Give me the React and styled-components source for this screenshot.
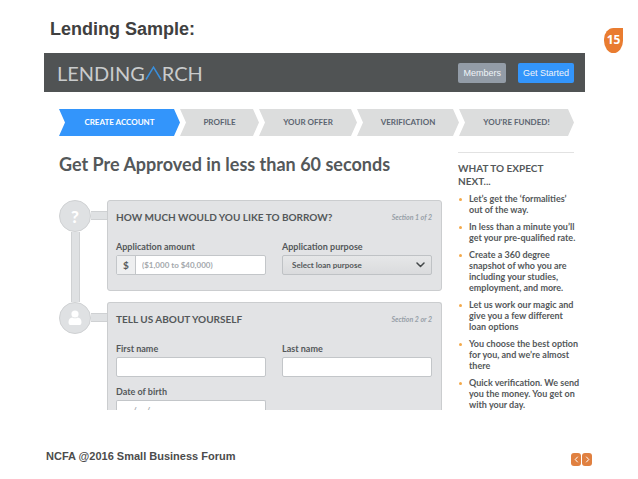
import React from 'react'
import styled, { createGlobalStyle } from 'styled-components'

const GlobalStyle = createGlobalStyle`
    * {
        box-sizing: border-box;
    }
    body {
        margin: 0;
        background: #fff;
        color: #54585a;
        font-family: Lato, 'Liberation Sans', sans-serif;
    }
    h1, h2, h3, p, ul {
        margin: 0;
        padding: 0;
    }
    button, input, select {
        font-family: inherit;
    }
`
const Slide = styled.div`
    min-height: 100vh;
    display: flex;
    flex-direction: column;
`
const SlideHeader = styled.header`
    display: flex;
    justify-content: space-between;
    padding: 18px 15px 0 50px;
    height: 53px;
`
const SlideTitle = styled.h1`
    font: bold 18px/22px 'Liberation Sans', Arial, sans-serif;
    color: #404040;
`
const PageNumber = styled.span`
    width: 19px;
    height: 25px;
    margin-top: 10px;
    border-radius: 10px 0 10px 10px / 12px 0 13px 13px;
    background: #e97c30;
    color: #fff;
    font: bold 12px/23px 'Open Sans', sans-serif;
    text-align: center;
`
const Site = styled.main`
    margin: 0 53px 0 44px;
`
const TopBar = styled.div`
    display: flex;
    align-items: center;
    padding: 0 11px 0 13px;
    height: 39px;
    background: #505354;
`
const Logo = styled.a`
    display: flex;
    align-items: center;
    margin-right: auto;
    color: #c9cbcc;
    font-size: 20px;
    line-height: 20px;
    font-weight: 400;
    text-decoration: none;
`
const TopButton = styled.button`
    height: 20px;
    margin-left: 12px;
    padding: 0 5px;
    border: 0;
    border-radius: 2px;
    background: ${({ $primary }) => ($primary ? '#3395fb' : '#939ca7')};
    color: #f0f4f8;
    font-family: 'Liberation Sans', Arial, sans-serif;
    font-size: 9px;
    line-height: 20px;
`
const Steps = styled.ol`
    display: flex;
    list-style: none;
    margin: 17px 11px 0 15px;
    padding: 0;
`
const Step = styled.li`
    flex: ${({ $size }) => $size} 1 0;
    height: 27px;
    clip-path: polygon(
        0 0, calc(100% - 6px) 0, 100% 50%, calc(100% - 6px) 100%, 0 100%, 6px 50%
    );
    background: ${({ $active }) => ($active ? '#3395fb' : '#dcdddd')};
    color: ${({ $active }) => ($active ? '#fff' : '#5b6470')};
    font-size: 8px;
    line-height: 27px;
    font-weight: 700;
    text-align: center;
    white-space: nowrap;
`
const Content = styled.div`
    display: grid;
    grid-template-columns: 1fr 116px;
    gap: 16px;
    padding: 16px 11px 0 15px;
`
const Heading = styled.h2`
    padding-bottom: 24px;
    font-size: 18px;
    line-height: 24px;
    font-weight: 700;
    white-space: nowrap;
`
const Section = styled.section`
    display: flex;
    align-items: stretch;
`
const Rail = styled.div`
    flex: 0 0 32px;
    display: flex;
    flex-direction: column;
    align-items: center;
`
const Circle = styled.div`
    display: flex;
    align-items: center;
    justify-content: center;
    width: 32px;
    height: 32px;
    border: 1px solid #cfd1d3;
    border-radius: 50%;
    background: #dfe1e3;
    color: #fff;
    font-size: 17px;
    font-weight: 900;
`
const RailLine = styled.div`
    flex: 1;
    width: 9px;
    border: solid #cfd1d3;
    border-width: 0 1px;
    background: #dfe1e3;
`
const Joint = styled.div`
    flex: 0 0 16px;
    height: 9px;
    margin-top: 11px;
    border: solid #cfd1d3;
    border-width: 1px 0;
    background: #dfe1e3;
`
const CardWrap = styled.div`
    flex: 1;
    padding-bottom: ${({ $last }) => ($last ? '0' : '11px')};
`
const Card = styled.div`
    padding: 8px 9px ${({ $last }) => ($last ? '0' : '15px')} 8px;
    border: 1px solid #cbcdcf;
    border-bottom-width: ${({ $last }) => ($last ? '0' : '1px')};
    border-radius: ${({ $last }) => ($last ? '3px 3px 0 0' : '3px')};
    background: #e2e3e5;
`
const CardHead = styled.div`
    display: flex;
    justify-content: space-between;
    align-items: center;
    height: 16px;
    margin-bottom: 16px;
`
const CardTitle = styled.h3`
    font-size: 10px;
    line-height: 16px;
    font-weight: 700;
`
const SectionCount = styled.em`
    color: #97a0a8;
    font-size: 7px;
    font-weight: 700;
`
const Fields = styled.div`
    display: grid;
    grid-template-columns: 1fr 1fr;
    gap: 9px 16px;
`
const Field = styled.div`
    display: flex;
    flex-direction: column;
    min-width: 0;
`
const Label = styled.label`
    margin-bottom: 2px;
    font-size: 9px;
    line-height: 12px;
    font-weight: 700;
`
const Control = styled.div`
    display: flex;
    height: ${({ $cut }) => ($cut ? '10px' : '20px')};
    overflow: hidden;
    border: 1px solid #c3c6c9;
    border-bottom-width: ${({ $cut }) => ($cut ? '0' : '1px')};
    border-radius: ${({ $cut }) => ($cut ? '2px 2px 0 0' : '2px')};
    background: #fff;
`
const Prefix = styled.span`
    flex: 0 0 19px;
    border-right: 1px solid #c3c6c9;
    background: #eeeff0;
    font-size: 10px;
    line-height: 18px;
    font-weight: 700;
    text-align: center;
`
const TextInput = styled.input`
    flex: 1;
    min-width: 0;
    height: 18px;
    padding: 0 6px;
    border: 0;
    background: transparent;
    color: #54585a;
    font-size: 8px;
    font-weight: 700;
    outline: none;
    &::placeholder {
        color: #a4a8ac;
    }
`
const DateInput = styled(TextInput)`
    padding: 0 16px;
    white-space: pre;
`
const SelectBox = styled.div`
    display: grid;
    align-items: center;
    height: 20px;
    border: 1px solid #bfc2c5;
    border-radius: 2px;
    background: linear-gradient(#e6e7e8, #dadbdd);
    & > * {
        grid-area: 1 / 1;
    }
    svg {
        justify-self: end;
        margin-right: 6px;
        pointer-events: none;
    }
`
const Select = styled.select`
    appearance: none;
    width: 100%;
    height: 18px;
    padding: 0 9px;
    border: 0;
    background: transparent;
    color: #54585a;
    font-size: 8px;
    font-weight: 700;
`
const Aside = styled.aside`
    padding-top: 9px;
    border-top: 1px solid #e2e2e2;
`
const AsideTitle = styled.h3`
    font-size: 10px;
    line-height: 13px;
    font-weight: 700;
`
const Tips = styled.ul`
    display: flex;
    flex-direction: column;
    gap: 6px;
    padding-top: 5px;
    list-style: none;
`
const Tip = styled.li`
    display: flex;
    font-size: 9px;
    line-height: 11px;
    font-weight: 700;
    white-space: pre;
    &::before {
        content: '';
        flex: 0 0 3px;
        height: 3px;
        margin: 5px 7px 0 1px;
        border-radius: 50%;
        background: #f3a94a;
    }
`
const SlideFooter = styled.footer`
    display: flex;
    align-items: center;
    justify-content: space-between;
    padding: 35px 46px 14px;
`
const FooterText = styled.p`
    color: #4c4c4c;
    font: bold 11px/14px 'Liberation Sans', Arial, sans-serif;
`
const Pager = styled.nav`
    display: flex;
    gap: 1px;
    padding-top: 8px;
`
const PagerButton = styled.button`
    display: flex;
    align-items: center;
    justify-content: center;
    width: 10px;
    height: 13px;
    padding: 0;
    border: 0;
    border-radius: 3px;
    background: #e08040;
`

const steps = [
    { name: 'CREATE ACCOUNT', size: 121, active: true },
    { name: 'PROFILE', size: 79 },
    { name: 'YOUR OFFER', size: 98 },
    { name: 'VERIFICATION', size: 102 },
    { name: "YOU'RE FUNDED!", size: 115 },
]

const tips = [
    'Let’s get the ‘formalities’\nout of the way.',
    'In less than a minute you’ll\nget your pre-qualified rate.',
    'Create a 360 degree\nsnapshot of who you are\nincluding your studies,\nemployment, and more.',
    'Let us work our magic and\ngive you a few different\nloan options',
    'You choose the best option\nfor you, and we’re almost\nthere',
    'Quick verification. We send\nyou the money. You get on\nwith your day.',
]

const Peak = () => (
    <svg width="17" height="14" viewBox="0 0 17 14" fill="none">
        <path d="M1 13.500 8.500 1.200 16 13.500" stroke="#3a8fdc" strokeWidth="1.500" />
    </svg>
)

const Person = () => (
    <svg width="14" height="16" viewBox="0 0 14 16" fill="#fff">
        <circle cx="7" cy="4" r="3.6" />
        <path d="M.5 12.2C.5 9 2.2 7.6 4.2 7.4c1.6 1.2 4 1.2 5.6 0 2 .2 3.7 1.6 3.7 4.8 0 2-1 2.8-2.5 2.8H3C1.500 15 .5 14.200.5 12.200Z" />
    </svg>
)

const Chevron = ({ d, ...rest }) => (
    <svg fill="none" strokeLinecap="round" strokeLinejoin="round" {...rest}>
        <path d={d} />
    </svg>
)

const App = () => {
    return (
        <Slide>
            <GlobalStyle />
            <SlideHeader>
                <SlideTitle>Lending Sample:</SlideTitle>
                <PageNumber>15</PageNumber>
            </SlideHeader>
            <Site>
                <TopBar>
                    <Logo href="#">LENDING<Peak />RCH</Logo>
                    <TopButton type="button">Members</TopButton>
                    <TopButton type="button" $primary>Get Started</TopButton>
                </TopBar>
                <Steps>
                    {steps.map(({ name, size, active }) => (
                        <Step key={name} $size={size} $active={active}>{name}</Step>
                    ))}
                </Steps>
                <Content>
                    <div>
                        <Heading>Get Pre Approved in less than 60 seconds</Heading>
                        <Section>
                            <Rail>
                                <Circle>?</Circle>
                                <RailLine />
                            </Rail>
                            <Joint />
                            <CardWrap>
                                <Card>
                                    <CardHead>
                                        <CardTitle>HOW MUCH WOULD YOU LIKE TO BORROW?</CardTitle>
                                        <SectionCount>Section 1 of 2</SectionCount>
                                    </CardHead>
                                    <Fields>
                                        <Field>
                                            <Label htmlFor="amount">Application amount</Label>
                                            <Control>
                                                <Prefix>$</Prefix>
                                                <TextInput id="amount" placeholder="($1,000 to $40,000)" />
                                            </Control>
                                        </Field>
                                        <Field>
                                            <Label htmlFor="purpose">Application purpose</Label>
                                            <SelectBox>
                                                <Select id="purpose">
                                                    <option>Select loan purpose</option>
                                                </Select>
                                                <Chevron width="9" height="6" viewBox="0 0 9 6" stroke="#44484a" strokeWidth="1.500" d="M1 1l3.500 3.500L8 1" />
                                            </SelectBox>
                                        </Field>
                                    </Fields>
                                </Card>
                            </CardWrap>
                        </Section>
                        <Section>
                            <Rail>
                                <Circle><Person /></Circle>
                            </Rail>
                            <Joint />
                            <CardWrap $last>
                                <Card $last>
                                    <CardHead>
                                        <CardTitle>TELL US ABOUT YOURSELF</CardTitle>
                                        <SectionCount>Section 2 or 2</SectionCount>
                                    </CardHead>
                                    <Fields>
                                        <Field>
                                            <Label htmlFor="first">First name</Label>
                                            <Control><TextInput id="first" /></Control>
                                        </Field>
                                        <Field>
                                            <Label htmlFor="last">Last name</Label>
                                            <Control><TextInput id="last" /></Control>
                                        </Field>
                                        <Field>
                                            <Label htmlFor="birth">Date of birth</Label>
                                            <Control $cut>
                                                <DateInput id="birth" placeholder="/     /" />
                                            </Control>
                                        </Field>
                                    </Fields>
                                </Card>
                            </CardWrap>
                        </Section>
                    </div>
                    <Aside>
                        <AsideTitle>WHAT TO EXPECT NEXT...</AsideTitle>
                        <Tips>
                            {tips.map((tip) => <Tip key={tip}>{tip}</Tip>)}
                        </Tips>
                    </Aside>
                </Content>
            </Site>
            <SlideFooter>
                <FooterText>NCFA @2016 Small Business Forum</FooterText>
                <Pager>
                    <PagerButton type="button" aria-label="Previous">
                        <Chevron width="5" height="7" viewBox="0 0 5 7" stroke="#fff" d="M3.500 1 1.200 3.500l2.300 2.500" />
                    </PagerButton>
                    <PagerButton type="button" aria-label="Next">
                        <Chevron width="5" height="7" viewBox="0 0 5 7" stroke="#fff" d="M1.500 1l2.300 2.500L1.500 6" />
                    </PagerButton>
                </Pager>
            </SlideFooter>
        </Slide>
    )
}

export default App
